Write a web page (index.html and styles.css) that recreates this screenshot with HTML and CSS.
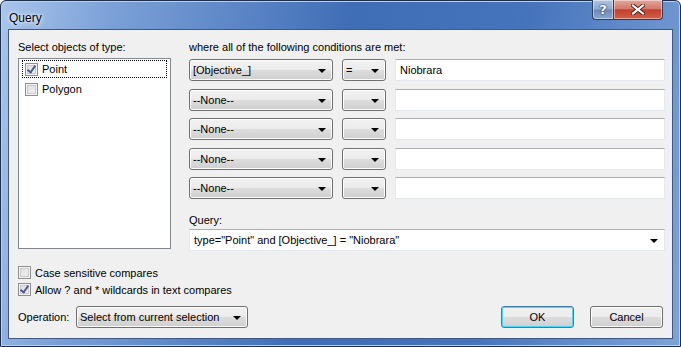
FILE: index.html
```html
<!DOCTYPE html>
<html lang="en">
<head>
  <meta charset="UTF-8" />
  <title>Query</title>
  <link rel="stylesheet" href="styles.css">
</head>
<body>
  <div class="window">
    <div class="titlebar">
      <span class="title">Query</span>
      <div class="caption">
        <span class="cap-btn help">?</span>
        <span class="cap-btn close">
          <svg width="14" height="11" viewBox="0 0 14 11">
            <path d="M2 1.5 L12 9.5 M12 1.5 L2 9.5" stroke="#5a1a14" stroke-width="4" stroke-linecap="square"/>
            <path d="M2 1.5 L12 9.5 M12 1.5 L2 9.5" stroke="#fff" stroke-width="2.2" stroke-linecap="square"/>
          </svg>
        </span>
      </div>
    </div>

    <div class="client">
      <div class="main">
        <div class="types">
          <div class="label">Select objects of type:</div>
          <div class="listbox">
            <div class="item focused"><span class="check checked"></span>Point</div>
            <div class="item"><span class="check"></span>Polygon</div>
          </div>
        </div>

        <div class="conditions">
          <div class="label">where all of the following conditions are met:</div>
          <div class="cond-rows">
            <div class="combo field">[Objective_]</div>
            <div class="combo op">=</div>
            <div class="textbox">Niobrara</div>

            <div class="combo field">--None--</div>
            <div class="combo op"></div>
            <div class="textbox"></div>

            <div class="combo field">--None--</div>
            <div class="combo op"></div>
            <div class="textbox"></div>

            <div class="combo field">--None--</div>
            <div class="combo op"></div>
            <div class="textbox"></div>

            <div class="combo field">--None--</div>
            <div class="combo op"></div>
            <div class="textbox"></div>
          </div>
          <div class="label query-label">Query:</div>
          <div class="query-box">type="Point" and [Objective_] = "Niobrara"</div>
        </div>
      </div>

      <div class="options">
        <div class="option"><span class="check"></span>Case sensitive compares</div>
        <div class="option"><span class="check checked"></span>Allow ? and * wildcards in text compares</div>
      </div>

      <div class="footer">
        <span class="op-label">Operation:</span>
        <div class="combo operation">Select from current selection</div>
        <div class="buttons">
          <button class="btn default">OK</button>
          <button class="btn">Cancel</button>
        </div>
      </div>
    </div>
  </div>
</body>
</html>
```

FILE: styles.css
```css
body {
  margin: 0;
  font-family: "Liberation Sans", Arial, sans-serif;
  font-size: 11px;
  color: #000;
  background: #fff;
}

.window {
  width: 681px;
  height: 347px;
  box-sizing: border-box;
  display: flex;
  flex-direction: column;
  padding: 0 7px 7px;
  border: 1px solid #1d2f4a;
  border-radius: 6px 6px 0 0;
  background: linear-gradient(100deg, #a9c5ea 0%, #7ca1d8 15%, #3f6db6 48%, #4674bc 72%, #7ea3d8 100%);
  box-shadow: inset 0 0 0 1px #b9cfee;
}

.titlebar {
  height: 28px;
  display: flex;
  justify-content: space-between;
  align-items: flex-start;
}

.title {
  margin: 10px 0 0 1px;
  font-size: 12px;
  line-height: 14px;
  text-shadow: 0 0 6px #fff, 0 0 3px #fff;
}

.caption {
  display: flex;
  margin-right: 10px;
  margin-top: -1px;
}

.cap-btn {
  height: 20px;
  display: flex;
  align-items: center;
  justify-content: center;
  border: 1px solid #2c3e5c;
  border-top: none;
  box-sizing: border-box;
  box-shadow: inset 0 0 0 1px rgba(255, 255, 255, 0.45);
}

.help {
  width: 21px;
  border-radius: 0 0 0 4px;
  border-right: none;
  background: linear-gradient(#b0c4e3 0%, #8ea8d0 48%, #6a88b8 52%, #8aa6d2 100%);
  color: #fff;
  font-family: "DejaVu Sans", sans-serif;
  font-weight: bold;
  font-size: 13px;
  text-shadow: 0 0 2px #1c2c48, 0 0 1px #1c2c48;
}

.close {
  width: 50px;
  border-radius: 0 0 4px 0;
  background: linear-gradient(#e4a79c 0%, #d47a6a 45%, #c4402c 52%, #d0604a 100%);
}

.client {
  flex: 1;
  background: #f0f0f0;
  border: 1px solid #3e5a84;
  padding: 10px 9px 0;
  display: flex;
  flex-direction: column;
}

.main {
  display: grid;
  grid-template-columns: 153px 476px;
  column-gap: 18px;
}

.label {
  line-height: 15px;
  height: 15px;
  white-space: nowrap;
}

.types .label {
  margin-bottom: 3px;
}

.listbox {
  height: 191px;
  box-sizing: border-box;
  border: 1px solid #828790;
  background: #fff;
  padding: 1px 3px;
}

.item {
  height: 18px;
  box-sizing: border-box;
  display: flex;
  align-items: center;
  padding-left: 2px;
  border: 1px dotted transparent;
  margin-bottom: 2px;
}

.item.focused {
  border-color: #000;
}

.check {
  width: 13px;
  height: 13px;
  box-sizing: border-box;
  border: 1px solid #8e8f8f;
  background: linear-gradient(135deg, #dcdcdc, #f4f4f4);
  box-shadow: inset 0 0 0 1px #f4f4f4, inset 0 0 0 2px #c9c9c9;
  margin-right: 4px;
  flex: none;
  position: relative;
}

.check.checked::after {
  content: "";
  position: absolute;
  left: 3px;
  top: 0px;
  width: 3px;
  height: 7px;
  border: solid #4a5c96;
  border-width: 0 2px 2px 0;
  transform: rotate(35deg);
}

.cond-rows {
  margin-top: 4px;
  display: grid;
  grid-template-columns: 144px 44px 270px;
  grid-auto-rows: 22px;
  column-gap: 9px;
  row-gap: 7.5px;
}

.combo {
  box-sizing: border-box;
  border: 1px solid #707070;
  border-radius: 3px;
  background: linear-gradient(#f2f2f2 0%, #ebebeb 50%, #dddddd 51%, #cfcfcf 100%);
  box-shadow: inset 0 0 0 1px #fcfcfc;
  padding-left: 3px;
  display: flex;
  align-items: center;
  position: relative;
  white-space: nowrap;
}

.combo::after,
.query-box::after {
  content: "";
  position: absolute;
  right: 6px;
  top: 9px;
  border-left: 4px solid transparent;
  border-right: 4px solid transparent;
  border-top: 4px solid #000;
}

.textbox {
  box-sizing: border-box;
  border: 1px solid #e3e9ef;
  border-top-color: #abadb3;
  background: #fff;
  padding-left: 4px;
  display: flex;
  align-items: center;
}

.query-label {
  margin-top: 14px;
  margin-bottom: 1px;
}

.query-box {
  height: 22px;
  box-sizing: border-box;
  border: 1px solid #e3e9ef;
  border-top-color: #abadb3;
  background: #fff;
  padding-left: 4px;
  display: flex;
  align-items: center;
  position: relative;
  white-space: nowrap;
}

.options {
  margin-top: 13px;
}

.option {
  height: 17px;
  display: flex;
  align-items: center;
  white-space: nowrap;
}

.footer {
  margin-top: 8px;
  display: flex;
  align-items: center;
  height: 22px;
}

.op-label {
  flex: none;
  width: 58px;
  white-space: nowrap;
}

.operation {
  width: 172px;
  height: 22px;
}

.buttons {
  margin-left: auto;
  display: flex;
  gap: 16px;
}

.btn {
  width: 73px;
  height: 22px;
  font: inherit;
  border: 1px solid #707070;
  border-radius: 3px;
  background: linear-gradient(#f2f2f2 0%, #ebebeb 50%, #dddddd 51%, #cfcfcf 100%);
  box-shadow: inset 0 0 0 1px #fcfcfc;
  padding: 0;
}

.btn.default {
  border-color: #3c7fb1;
  box-shadow: inset 0 0 0 1px #48d8fb;
}
```
